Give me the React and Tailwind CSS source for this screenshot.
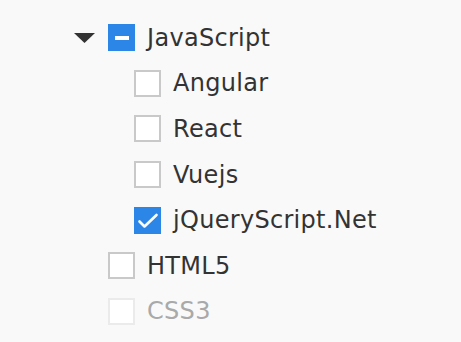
import React from 'react';

const tree = [
  {
    label: 'JavaScript',
    state: 'indeterminate',
    open: true,
    children: [
      { label: 'Angular', state: 'unchecked' },
      { label: 'React', state: 'unchecked' },
      { label: 'Vuejs', state: 'unchecked' },
      { label: 'jQueryScript.Net', state: 'checked' },
    ],
  },
  { label: 'HTML5', state: 'unchecked' },
  { label: 'CSS3', state: 'unchecked', disabled: true },
];

function Box({ state, disabled }) {
  if (state === 'checked') {
    return (
      <span className="flex h-[27px] w-[27px] shrink-0 items-center justify-center bg-[#2c86e8]">
        <svg width="27" height="27" viewBox="0 0 27 27">
          <path d="M5.5 14.5 L10.5 19.5 L22.5 8" fill="none" stroke="#fff" strokeWidth="2.6" strokeLinecap="round" strokeLinejoin="round" />
        </svg>
      </span>
    );
  }
  if (state === 'indeterminate') {
    return (
      <span className="flex h-[27px] w-[27px] shrink-0 items-center justify-center bg-[#2c86e8]">
        <span className="h-[4px] w-[14px] bg-white" />
      </span>
    );
  }
  return (
    <span
      className={
        disabled
          ? 'h-[27px] w-[27px] shrink-0 border-2 border-[#ebebeb] bg-white'
          : 'h-[27px] w-[27px] shrink-0 border-2 border-[#c9c9c9] bg-white'
      }
    />
  );
}

function Node({ node, depth }) {
  return (
    <>
      <div className="flex h-[45.6px] items-center" style={{ paddingLeft: depth * 26 }}>
        <span className="flex w-[34px] shrink-0 items-center">
          {node.children && (
            <svg width="21" height="10" viewBox="0 0 21 10">
              <path d="M0 0 L21 0 L10.5 10 Z" fill="#333" />
            </svg>
          )}
        </span>
        <Box state={node.state} disabled={node.disabled} />
        <span
          className={
            node.disabled
              ? 'ml-[12px] text-[24px] leading-none tracking-[0.3px] text-[#a9a9a9]'
              : 'ml-[12px] text-[24px] leading-none tracking-[0.3px] text-[#333]'
          }
        >
          {node.label}
        </span>
      </div>
      {node.open && node.children.map(c => <Node key={c.label} node={c} depth={depth + 1} />)}
    </>
  );
}

export default function App() {
  return (
    <div
      className="h-[342px] w-[461px] bg-[#f9f9f9] pl-[74px] pt-[15px]"
      style={{ fontFamily: '"DejaVu Sans", Verdana, sans-serif' }}
    >
      {tree.map(n => (
        <Node key={n.label} node={n} depth={0} />
      ))}
    </div>
  );
}
